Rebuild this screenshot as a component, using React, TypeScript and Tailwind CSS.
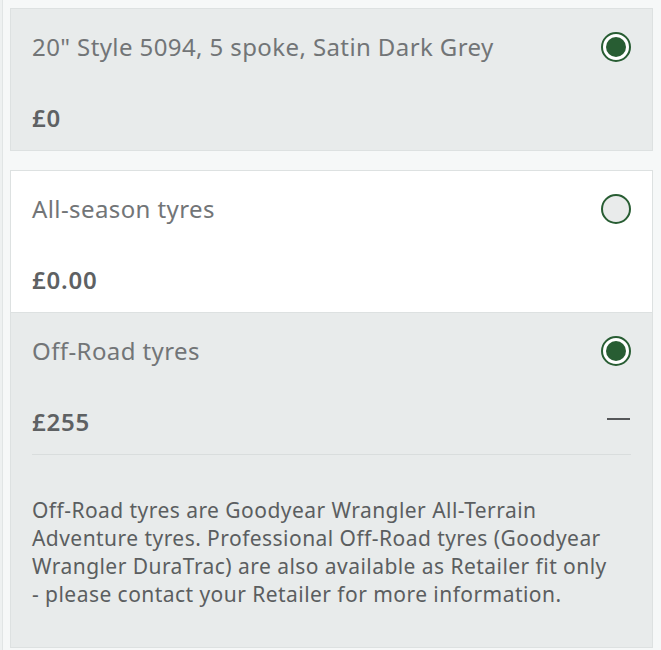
import React, { useState } from 'react';

type Option = {
    id: string;
    title: string;
    price: string;
    description?: React.ReactNode;
};

const wheels: Option[] = [
    { id: 'style-5094', title: '20" Style 5094, 5 spoke, Satin Dark Grey', price: '£0' },
];

const tyres: Option[] = [
    { id: 'all-season', title: 'All-season tyres', price: '£0.00' },
    {
        id: 'off-road',
        title: 'Off-Road tyres',
        price: '£255',
        description: (
            <>
                Off-Road tyres are Goodyear Wrangler All-Terrain Adventure tyres. Professional Off-Road tyres
                (Goodyear Wrangler DuraTrac) are also available as Retailer fit only{' '}
                <span className="whitespace-nowrap">- please</span> contact your Retailer for more information.
            </>
        ),
    },
];

const Radio: React.FC<{ checked: boolean }> = ({ checked }) => (
    <span
        className={`flex h-[30px] w-[30px] shrink-0 items-center justify-center rounded-full border-2 border-[#285d33] ${
            checked ? 'bg-white' : 'bg-[#e9ebeb]'
        }`}
    >
        {checked && <span className="h-[20px] w-[20px] rounded-full bg-[#285d33]" />}
    </span>
);

const OptionCard: React.FC<{
    option: Option;
    selected: boolean;
    onSelect: () => void;
    className?: string;
}> = ({ option, selected, onSelect, className = '' }) => (
    <div
        onClick={onSelect}
        className={`cursor-pointer border border-[#dde1e1] px-[21px] ${
            selected ? 'bg-[#e8ebeb]' : 'bg-white'
        } ${className}`}
    >
        <div className="flex items-center justify-between pt-[21px]">
            <span className="text-[24px] leading-[34px] tracking-[0.4px] text-[#727577]">{option.title}</span>
            <Radio checked={selected} />
        </div>
        <div className="flex items-center justify-between pt-[37px] pb-[15px]">
            <span className="text-[24px] font-semibold leading-[34px] tracking-[0.8px] text-[#5e6163]">
                {option.price}
            </span>
            {option.description && selected && (
                <span className="mr-[1px] mb-[7px] block h-[2px] w-[23px] bg-[#555759]" />
            )}
        </div>
        {option.description && selected && (
            <div className="border-t border-[#d9dddd] pt-[41px] pb-[39px]">
                <p className="text-[21px] leading-[28px] tracking-[0.45px] text-[#5b5e60]">{option.description}</p>
            </div>
        )}
    </div>
);

const App: React.FC = () => {
    const [wheel, setWheel] = useState('style-5094');
    const [tyre, setTyre] = useState('off-road');

    return (
        <div
            className="min-h-[650px] bg-[#eef1f1] pl-[2px]"
            style={{ fontFamily: '"Noto Sans", Lato, sans-serif' }}
        >
            <div className="min-h-[650px] border-l border-[#e1e5e5] bg-[#f6f8f8] pt-[8px] pl-[7px] pr-[8px]">
                {wheels.map(w => (
                    <OptionCard key={w.id} option={w} selected={wheel === w.id} onSelect={() => setWheel(w.id)} />
                ))}
                <div className="mt-[19px]">
                    {tyres.map((t, i) => (
                        <OptionCard
                            key={t.id}
                            option={t}
                            selected={tyre === t.id}
                            onSelect={() => setTyre(t.id)}
                            className={i > 0 ? 'border-t-0' : ''}
                        />
                    ))}
                </div>
            </div>
        </div>
    );
};

export default App;
